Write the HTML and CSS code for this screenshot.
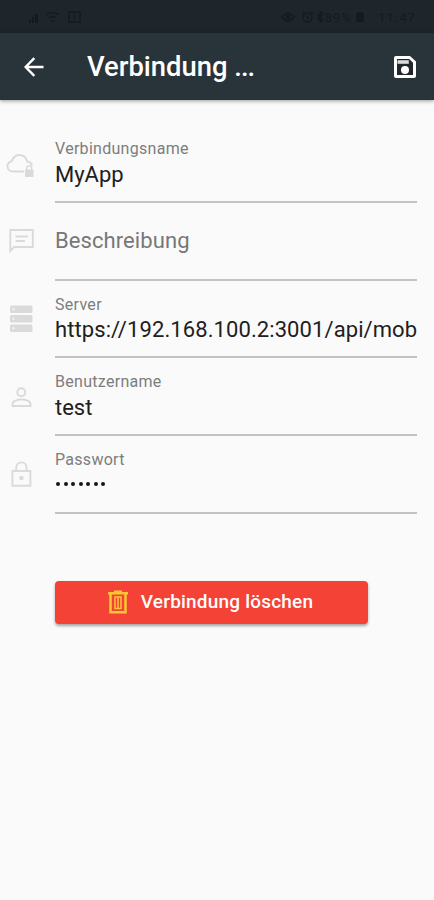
FILE: index.html
```html
<!DOCTYPE html>
<html lang="de">
<head>
<meta charset="utf-8">
<meta name="viewport" content="width=device-width, initial-scale=1">
<title>Verbindung</title>
<link rel="stylesheet" href="styles.css">
</head>
<body>
<div class="status">
  <div class="status-group">
    <svg width="10" height="11" viewBox="0 0 10 11" fill="currentColor"><path d="M0 8h2v3H0zM3 5h2v6H3zM6 2h3v9H6z"/></svg>
    <svg width="15" height="12" viewBox="0 0 15 12" fill="none" stroke="currentColor" stroke-width="1.500"><path d="M1 4q6.500-5 13 0M3.500 7q4-3 8 0M6 10h3"/></svg>
    <svg class="sim" width="15" height="12" viewBox="0 0 15 12" fill="none" stroke="currentColor" stroke-width="1.500"><path d="M2 1h11v10H2zM7.500 3v6"/></svg>
  </div>
  <div class="status-group">
    <svg width="14" height="12" viewBox="0 0 14 12" fill="none" stroke="currentColor" stroke-width="1.600"><path d="M1 6q6-8 12 0q-6 8-12 0z"/><circle cx="7" cy="6" r="1.600"/></svg>
    <svg class="alarm" width="13" height="12" viewBox="0 0 13 12" fill="none" stroke="currentColor" stroke-width="1.300"><circle cx="6.500" cy="6.500" r="4.500"/><path d="M6.500 4v3l2 1M1 3l2-2M10 1l2 2"/></svg>
    <svg width="8" height="12" viewBox="0 0 8 12" fill="none" stroke="currentColor" stroke-width="1.200"><path d="M1 3l6 6-3 2.500V.5L7 3 1 9"/></svg>
    <span class="percent">89%</span>
    <svg class="battery" width="8" height="10" viewBox="0 0 8 10" fill="currentColor"><path d="M2 0h4v1h2v9H0V1h2z"/></svg>
    <span>11:47</span>
  </div>
</div>
<header class="bar">
  <svg class="back" width="20" height="20" viewBox="0 0 20 20" fill="none" stroke="currentColor" stroke-width="2.400"><path d="M19.500 10H2M10.300 1.200L1.600 10l8.700 8.800"/></svg>
  <h1 class="title">Verbindung <span class="ellipsis">...</span></h1>
  <svg class="save" width="24" height="24" viewBox="0 0 24 24"><path d="M3 1h14l6 5.500V21q0 2-2 2H3q-2 0-2-2V3q0-2 2-2z" fill="#fff"/><path d="M4 4h12.200L20 7.800V20H4z" fill="#20262a"/><path d="M4.500 5.200h11.300v3.600H4.500z" fill="#d8dcde"/><circle cx="12" cy="15" r="4" fill="#fff"/></svg>
</header>
<main class="form">
  <div class="row">
    <svg class="icon cloud" width="30" height="30" viewBox="0 0 30 30" fill="none" stroke="currentColor" stroke-width="1.900"><path d="M19 22.500H7.500a5.200 5.200 0 0 1-.8-10.300C8.200 8.300 11 6 14.300 6c4 0 6.900 2.700 7.900 6.500 2 .2 4.200 1.700 5 4"/><path d="M20 20.500h8.500V28H20z" fill="currentColor" stroke="none"/><path d="M21.800 21v-2q0-2.200 2.400-2.200t2.400 2.200v2" stroke-width="1.500"/></svg>
    <div class="field"><span class="label">Verbindungsname</span><span class="value">MyApp</span></div>
  </div>
  <div class="row">
    <svg class="icon chat" width="30" height="30" viewBox="0 0 30 30" fill="none" stroke="currentColor" stroke-width="1.900"><path d="M4.300 26V5h22.500v17H8zM9.500 11.500h12.500M9.500 16h9.500"/></svg>
    <div class="field"><span class="placeholder">Beschreibung</span></div>
  </div>
  <div class="row">
    <svg class="icon" width="30" height="30" viewBox="0 0 30 30"><g fill="currentColor"><rect x="4" y="1.500" width="22.500" height="7.500" rx="1.500"/><rect x="4" y="11" width="22.500" height="7.500" rx="1.500"/><rect x="4" y="20.500" width="22.500" height="7.500" rx="1.500"/></g><g fill="#f1f1f1"><circle cx="7.500" cy="5.200" r="1.200"/><circle cx="7.500" cy="14.700" r="1.200"/><circle cx="7.500" cy="24.200" r="1.200"/></g></svg>
    <div class="field"><span class="label">Server</span><span class="value url">https://192.168.100.2:3001/api/mob</span></div>
  </div>
  <div class="row">
    <svg class="icon person" width="30" height="30" viewBox="0 0 30 30" fill="none" stroke="currentColor" stroke-width="1.900"><circle cx="15.300" cy="10.200" r="4"/><path d="M6.500 24v-2c0-3 5-4.500 9-4.500s9 1.500 9 4.500v2z"/></svg>
    <div class="field"><span class="label">Benutzername</span><span class="value">test</span></div>
  </div>
  <div class="row">
    <svg class="icon" width="30" height="30" viewBox="0 0 30 30" fill="none" stroke="currentColor" stroke-width="1.900"><path d="M6.400 12h18v14.800h-18zM10.200 12V8.500c0-6.800 10.400-6.800 10.400 0V12"/><circle cx="15.400" cy="19" r="2.300" fill="currentColor" stroke="none"/></svg>
    <div class="field"><span class="label">Passwort</span><span class="dots"><i></i><i></i><i></i><i></i><i></i><i></i><i></i></span></div>
  </div>
  <button class="delete" type="button">
    <svg width="20" height="24" viewBox="0 0 20 24" fill="none" stroke="#fcc634" stroke-width="2.500"><path d="M0 3.200h20M6 1.800h8M2.500 4v18.200h15V4"/><path d="M7 7v11.500h6V7zM10 7v11.500" stroke-width="1.500"/></svg>
    <span>Verbindung löschen</span>
  </button>
</main>
</body>
</html>
```
FILE: styles.css
```css
* { box-sizing: border-box; }
body {
  margin: 0;
  min-height: 900px;
  background: #fafafa;
  font-family: Roboto, sans-serif;
}
svg { display: block; flex: none; }
.status {
  height: 33px;
  padding: 1px 18px 0 29px;
  background: #1e262b;
  color: #141b1f;
  display: flex;
  justify-content: space-between;
  align-items: center;
  font-size: 13px;
  letter-spacing: 1.1px;
}
.status-group { display: flex; align-items: center; gap: 6px; }
.sim { margin-left: 1px; }
.alarm { margin-right: -4px; }
.percent { margin-left: -5px; }
.battery { margin: 0 8px 0 -2px; }
.bar {
  height: 67px;
  padding: 0 17px 0 24px;
  background: #29333a;
  color: #fff;
  display: flex;
  align-items: center;
  box-shadow: 0 1px 4px rgba(0, 0, 0, .4);
}
.title {
  margin: 0 auto 0 43px;
  font-size: 27.4px;
  font-weight: 500;
  line-height: 32px;
  white-space: pre;
}
.ellipsis { letter-spacing: -1px; }
.form { padding: 25px 17px 0 6px; }
.row { height: 77.8px; display: flex; }
.icon { margin-top: 23px; color: #dadada; }
.cloud { margin: 24px 1px 0 -1px; }
.chat { margin-top: 22px; }
.person { margin-top: 24px; }
.field {
  flex: 1;
  min-width: 0;
  margin-left: 19px;
  padding-top: 14px;
  border-bottom: 2px solid #c2c3c3;
  display: flex;
  flex-direction: column;
  align-items: flex-start;
  white-space: nowrap;
}
.label { font-size: 16px; line-height: 20px; color: #7d7d7d; letter-spacing: .29px; }
.value { margin-top: 3px; font-size: 22px; line-height: 26px; color: #202020; }
.url { margin-top: 2px; letter-spacing: .09px; }
.placeholder { margin-top: 9px; font-size: 22px; line-height: 30px; color: #777; letter-spacing: .08px; }
.dots { display: flex; gap: 3.500px; padding: 12px 0 0 1px; }
.dots i { width: 4px; height: 4px; border-radius: 50%; background: #161616; }
.delete {
  width: 313px;
  height: 43px;
  margin: 67px 0 0 49px;
  padding: 0 2px 0 0;
  border: 0;
  border-radius: 4px;
  background: #f44336;
  color: #fff;
  box-shadow: 0 2px 3px rgba(0, 0, 0, .35);
  display: flex;
  align-items: center;
  justify-content: center;
  gap: 13px;
  font: 500 19px/24px Roboto, sans-serif;
  letter-spacing: .2px;
}
```
